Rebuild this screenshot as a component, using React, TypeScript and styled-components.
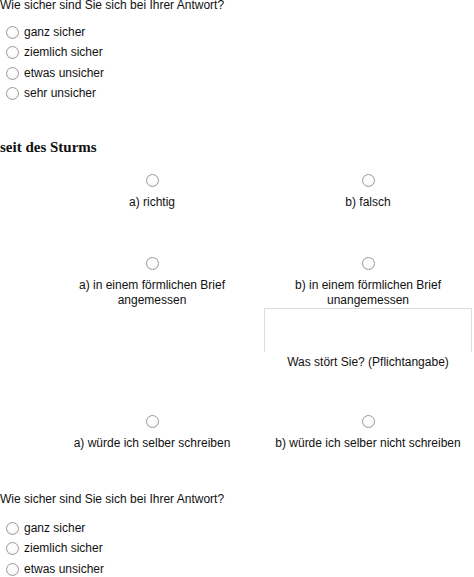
import React from "react";
import styled, { createGlobalStyle } from "styled-components";

const GlobalStyle = createGlobalStyle`
  html, body {
    margin: 0;
    padding: 0;
    background: #ffffff;
    overflow: hidden;
  }
  body {
    font-family: "Liberation Sans", Arial, sans-serif;
    font-size: 12px;
    color: #111111;
  }
`;

const Page = styled.div`
  width: 474px;
  overflow: hidden;
`;

const Question = styled.div<{ $top: number; $lh: number }>`
  line-height: ${(p) => p.$lh}px;
  margin-top: ${(p) => p.$top}px;
  white-space: nowrap;
`;

const OptionList = styled.div<{ $gap: number }>`
  display: flex;
  flex-direction: column;
  margin-top: ${(p) => p.$gap}px;
  padding-left: 6px;
`;

const OptionRow = styled.label`
  display: flex;
  align-items: center;
  gap: 5px;
  height: 20.5px;
  line-height: 15px;
`;

const Radio = styled.span`
  display: inline-block;
  box-sizing: border-box;
  width: 13px;
  height: 13px;
  border-radius: 50%;
  border: 1px solid #9a9a9a;
  background: radial-gradient(circle at 50% 40%, #ffffff 0%, #fbfbfb 55%, #e4e4e4 100%);
  flex: none;
`;

const SectionTitle = styled.div`
  font-family: "Liberation Serif", "Times New Roman", serif;
  font-weight: bold;
  font-size: 15px;
  line-height: 18px;
  margin-top: 34px;
`;

const Grid = styled.div`
  display: grid;
  grid-template-columns: 44px 216px 216px;
  width: 476px;
  row-gap: 47px;
  margin-top: 18px;
`;

const Cell = styled.div<{ $col: number }>`
  grid-column: ${(p) => p.$col};
  display: flex;
  flex-direction: column;
  align-items: center;
  text-align: center;
`;

const CellLabel = styled.div`
  margin-top: 8px;
  line-height: 15px;
  padding: 0 4px;
`;

const CommentBox = styled.div`
  align-self: stretch;
  margin: 0 4px;
  height: 44px;
  border: 1px solid #dcdcdc;
  border-bottom: none;
  box-sizing: border-box;
`;

const CommentLabel = styled.div`
  line-height: 15px;
  margin-top: 3px;
  margin-bottom: -2px;
`;

const confidence = ["ganz sicher", "ziemlich sicher", "etwas unsicher", "sehr unsicher"];

type Pair = { a: string; b: string; comment?: boolean };

const pairs: Pair[] = [
  { a: "a) richtig", b: "b) falsch" },
  {
    a: "a) in einem förmlichen Brief angemessen",
    b: "b) in einem förmlichen Brief unangemessen",
    comment: true,
  },
  { a: "a) würde ich selber schreiben", b: "b) würde ich selber nicht schreiben" },
];

function Confidence({
  items,
  top,
  lh,
  gap,
}: {
  items: string[];
  top: number;
  lh: number;
  gap: number;
}) {
  return (
    <>
      <Question $top={top} $lh={lh}>
        Wie sicher sind Sie sich bei Ihrer Antwort?
      </Question>
      <OptionList $gap={gap}>
        {items.map((t) => (
          <OptionRow key={t}>
            <Radio />
            <span>{t}</span>
          </OptionRow>
        ))}
      </OptionList>
    </>
  );
}

export default function App() {
  return (
    <>
      <GlobalStyle />
      <Page>
        <Confidence items={confidence} top={0} lh={11} gap={11} />
        <SectionTitle>seit des Sturms</SectionTitle>
        <Grid>
          {pairs.map((p, i) => (
            <React.Fragment key={i}>
              <Cell $col={2}>
                <Radio />
                <CellLabel>{p.a}</CellLabel>
              </Cell>
              <Cell $col={3}>
                <Radio />
                <CellLabel>{p.b}</CellLabel>
                {p.comment && (
                  <>
                    <CommentBox />
                    <CommentLabel>Was stört Sie? (Pflichtangabe)</CommentLabel>
                  </>
                )}
              </Cell>
            </React.Fragment>
          ))}
        </Grid>
        <Confidence items={confidence.slice(0, 3)} top={41} lh={15} gap={11} />
      </Page>
    </>
  );
}
